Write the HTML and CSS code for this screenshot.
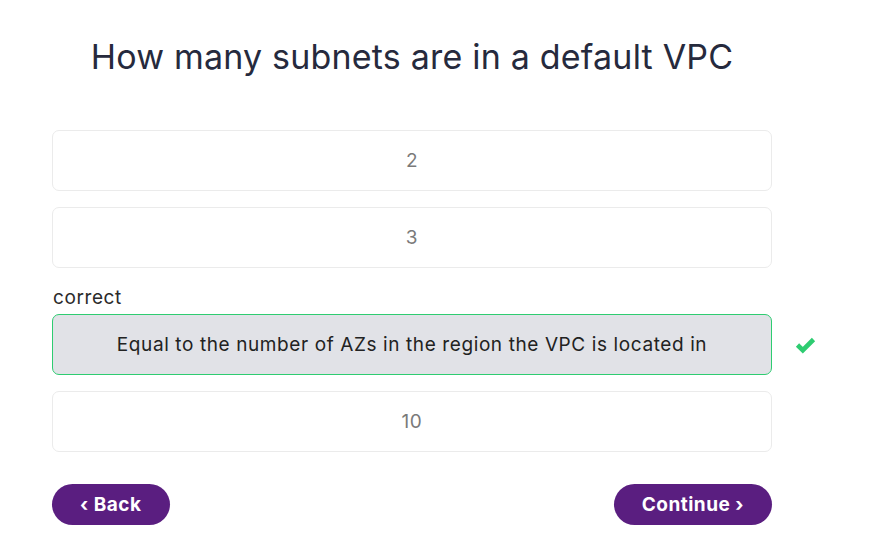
FILE: index.html
```html
<!DOCTYPE html>
<html>
<head>
<meta charset="utf-8">
<link rel="stylesheet" href="styles.css">
</head>
<body>
<main class="quiz">
  <h1 class="question">How many subnets are in a default VPC</h1>
  <div class="options">
    <div class="option-row"><div class="option">2</div></div>
    <div class="option-row"><div class="option">3</div></div>
    <div class="option-group">
      <div class="label">correct</div>
      <div class="option-row">
        <div class="option option-correct">Equal to the number of AZs in the region the VPC is located in</div>
        <svg class="check" width="21" height="19" viewBox="0 0 21 19"><path d="M2.5 10 L7.8 15.2 L18.5 4.5" fill="none" stroke="#2ecc71" stroke-width="4.6" stroke-linejoin="miter" stroke-linecap="butt"/></svg>
      </div>
    </div>
    <div class="option-row"><div class="option">10</div></div>
  </div>
  <div class="nav">
    <button class="btn">‹ Back</button>
    <button class="btn">Continue ›</button>
  </div>
</main>
</body>
</html>
```
FILE: styles.css
```css
html, body { margin: 0; padding: 0; background: #fff; }
body { font-family: Inter, "Noto Sans", sans-serif; }
.quiz { width: 720px; padding: 34px 0 0 52px; }
.question {
  margin: 0 0 50px;
  font-size: 34px;
  line-height: 46px;
  font-weight: 400;
  color: #262a3d;
  text-align: center;
  letter-spacing: 0.2px;
}
.options { display: flex; flex-direction: column; gap: 16px; }
.option-row { position: relative; }
.option {
  box-sizing: border-box;
  height: 61px;
  border: 1px solid #ebebeb;
  border-radius: 7px;
  display: flex;
  align-items: center;
  justify-content: center;
  font-size: 19px;
  letter-spacing: 0.6px;
  color: #7a7a7a;
  background: #fff;
}
.option-correct {
  border-color: #2ecc71;
  background: #e1e2e7;
  color: #222;
}
.label { font-size: 19px; letter-spacing: 0.6px; color: #2b2b2b; line-height: 22px; margin: 3px 0 5px 1px; }
.check { position: absolute; left: 743px; top: 21px; }
.nav { display: flex; justify-content: space-between; margin-top: 32px; }
.btn {
  height: 41px;
  border: none;
  border-radius: 21px;
  background: #5a1e80;
  color: #fff;
  font-family: inherit;
  font-size: 19px;
  font-weight: 700;
  letter-spacing: 0.5px;
  padding: 0 28px;
}
```
